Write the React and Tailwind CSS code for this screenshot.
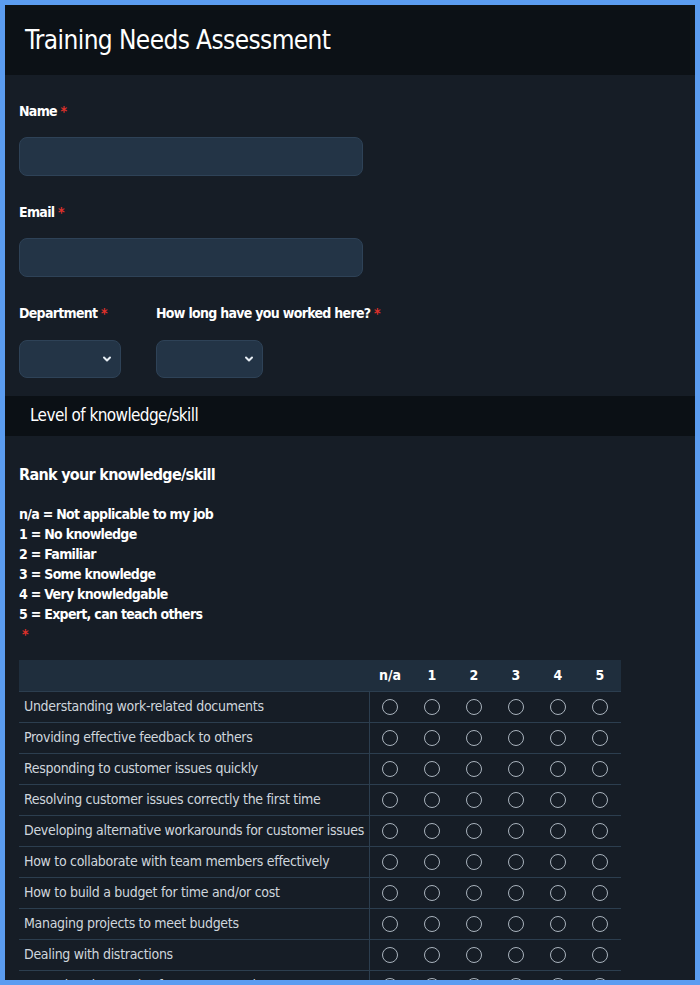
import React from 'react';

const FONT = "font-['DejaVu_Sans_Condensed','DejaVu_Sans',sans-serif]";

const questions = [
  'Understanding work-related documents',
  'Providing effective feedback to others',
  'Responding to customer issues quickly',
  'Resolving customer issues correctly the first time',
  'Developing alternative workarounds for customer issues',
  'How to collaborate with team members effectively',
  'How to build a budget for time and/or cost',
  'Managing projects to meet budgets',
  'Dealing with distractions',
  'Assessing the needs of customers and teams',
];

const cols = ['n/a', '1', '2', '3', '4', '5'];

function Label({ children }) {
  return (
    <p className="text-[14px] tracking-[-0.7px] font-bold text-white leading-5">
      {children} <span className="text-[#e0312b]">*</span>
    </p>
  );
}

function Select({ w }) {
  return (
    <div className={`${w} h-[38px] rounded-lg bg-[#233446] border border-[#2e4257] flex items-center justify-end pr-[8px]`}>
      <svg width="10" height="10" viewBox="0 0 10 10" fill="none" stroke="#e6edf3" strokeWidth="2" strokeLinecap="round" strokeLinejoin="round">
        <path d="M2 3.5l3 3 3-3" />
      </svg>
    </div>
  );
}

export default function App() {
  return (
    <div className={`h-[985px] overflow-hidden border-[5px] border-[#5b9cf0] bg-[#161d26] ${FONT}`}>
      <div className="h-[70px] bg-[#0c1116] flex items-center px-5">
        <h1 className="text-[26px] tracking-[-0.6px] text-white font-normal leading-none">Training Needs Assessment</h1>
      </div>

      <div className="px-[14px] pt-[26px]">
        <Label>Name</Label>
        <div className="mt-[16px] w-[344px] h-[39px] rounded-lg bg-[#233446] border border-[#2e4257]" />

        <div className="mt-[26px]">
          <Label>Email</Label>
        </div>
        <div className="mt-[16px] w-[344px] h-[39px] rounded-lg bg-[#233446] border border-[#2e4257]" />

        <div className="mt-[26px] flex gap-[35px]">
          <div>
            <Label>Department</Label>
            <div className="mt-[17px]">
              <Select w="w-[102px]" />
            </div>
          </div>
          <div>
            <Label>How long have you worked here?</Label>
            <div className="mt-[17px]">
              <Select w="w-[107px]" />
            </div>
          </div>
        </div>
      </div>

      <div className="mt-[18px] h-[40px] bg-[#0b1015] flex items-center px-[25px]">
        <span className="text-[17px] tracking-[-0.6px] text-white">Level of knowledge/skill</span>
      </div>

      <div className="px-[14px] pt-[27px]">
        <p className="text-[16px] tracking-[-0.7px] font-bold text-white leading-6">Rank your knowledge/skill</p>
        <div className="mt-[17px] text-[14px] tracking-[-0.7px] font-bold text-white leading-5">
          <p>n/a = Not applicable to my job</p>
          <p>1 = No knowledge</p>
          <p>2 = Familiar</p>
          <p>3 = Some knowledge</p>
          <p>4 = Very knowledgable</p>
          <p>5 = Expert, can teach others</p>
          <p className="text-[#e0312b] pl-[3px]">*</p>
        </div>

        <table className="mt-[16px] w-[602px] table-fixed border-collapse">
          <thead>
            <tr className="bg-[#1f2e3d] h-[31px]">
              <th className="w-[350px] border-b border-[#2c3e4f]" />
              {cols.map(c => (
                <th key={c} className="w-[42px] text-[14px] font-bold text-white text-center border-b border-[#2c3e4f]">{c}</th>
              ))}
            </tr>
          </thead>
          <tbody>
            {questions.map(q => (
              <tr key={q} className="h-[31px]">
                <td className="pl-[5px] text-[14px] tracking-[-0.3px] text-[#cfd6dd] whitespace-nowrap overflow-hidden border-b border-r border-[#2c3e4f] font-light">{q}</td>
                {cols.map(c => (
                  <td key={c} className="text-center border-b border-[#2c3e4f]">
                    <span className="inline-block align-middle w-[16px] h-[16px] rounded-full border-[1.5px] border-[#a9b3bd]" />
                  </td>
                ))}
              </tr>
            ))}
          </tbody>
        </table>
      </div>
    </div>
  );
}
